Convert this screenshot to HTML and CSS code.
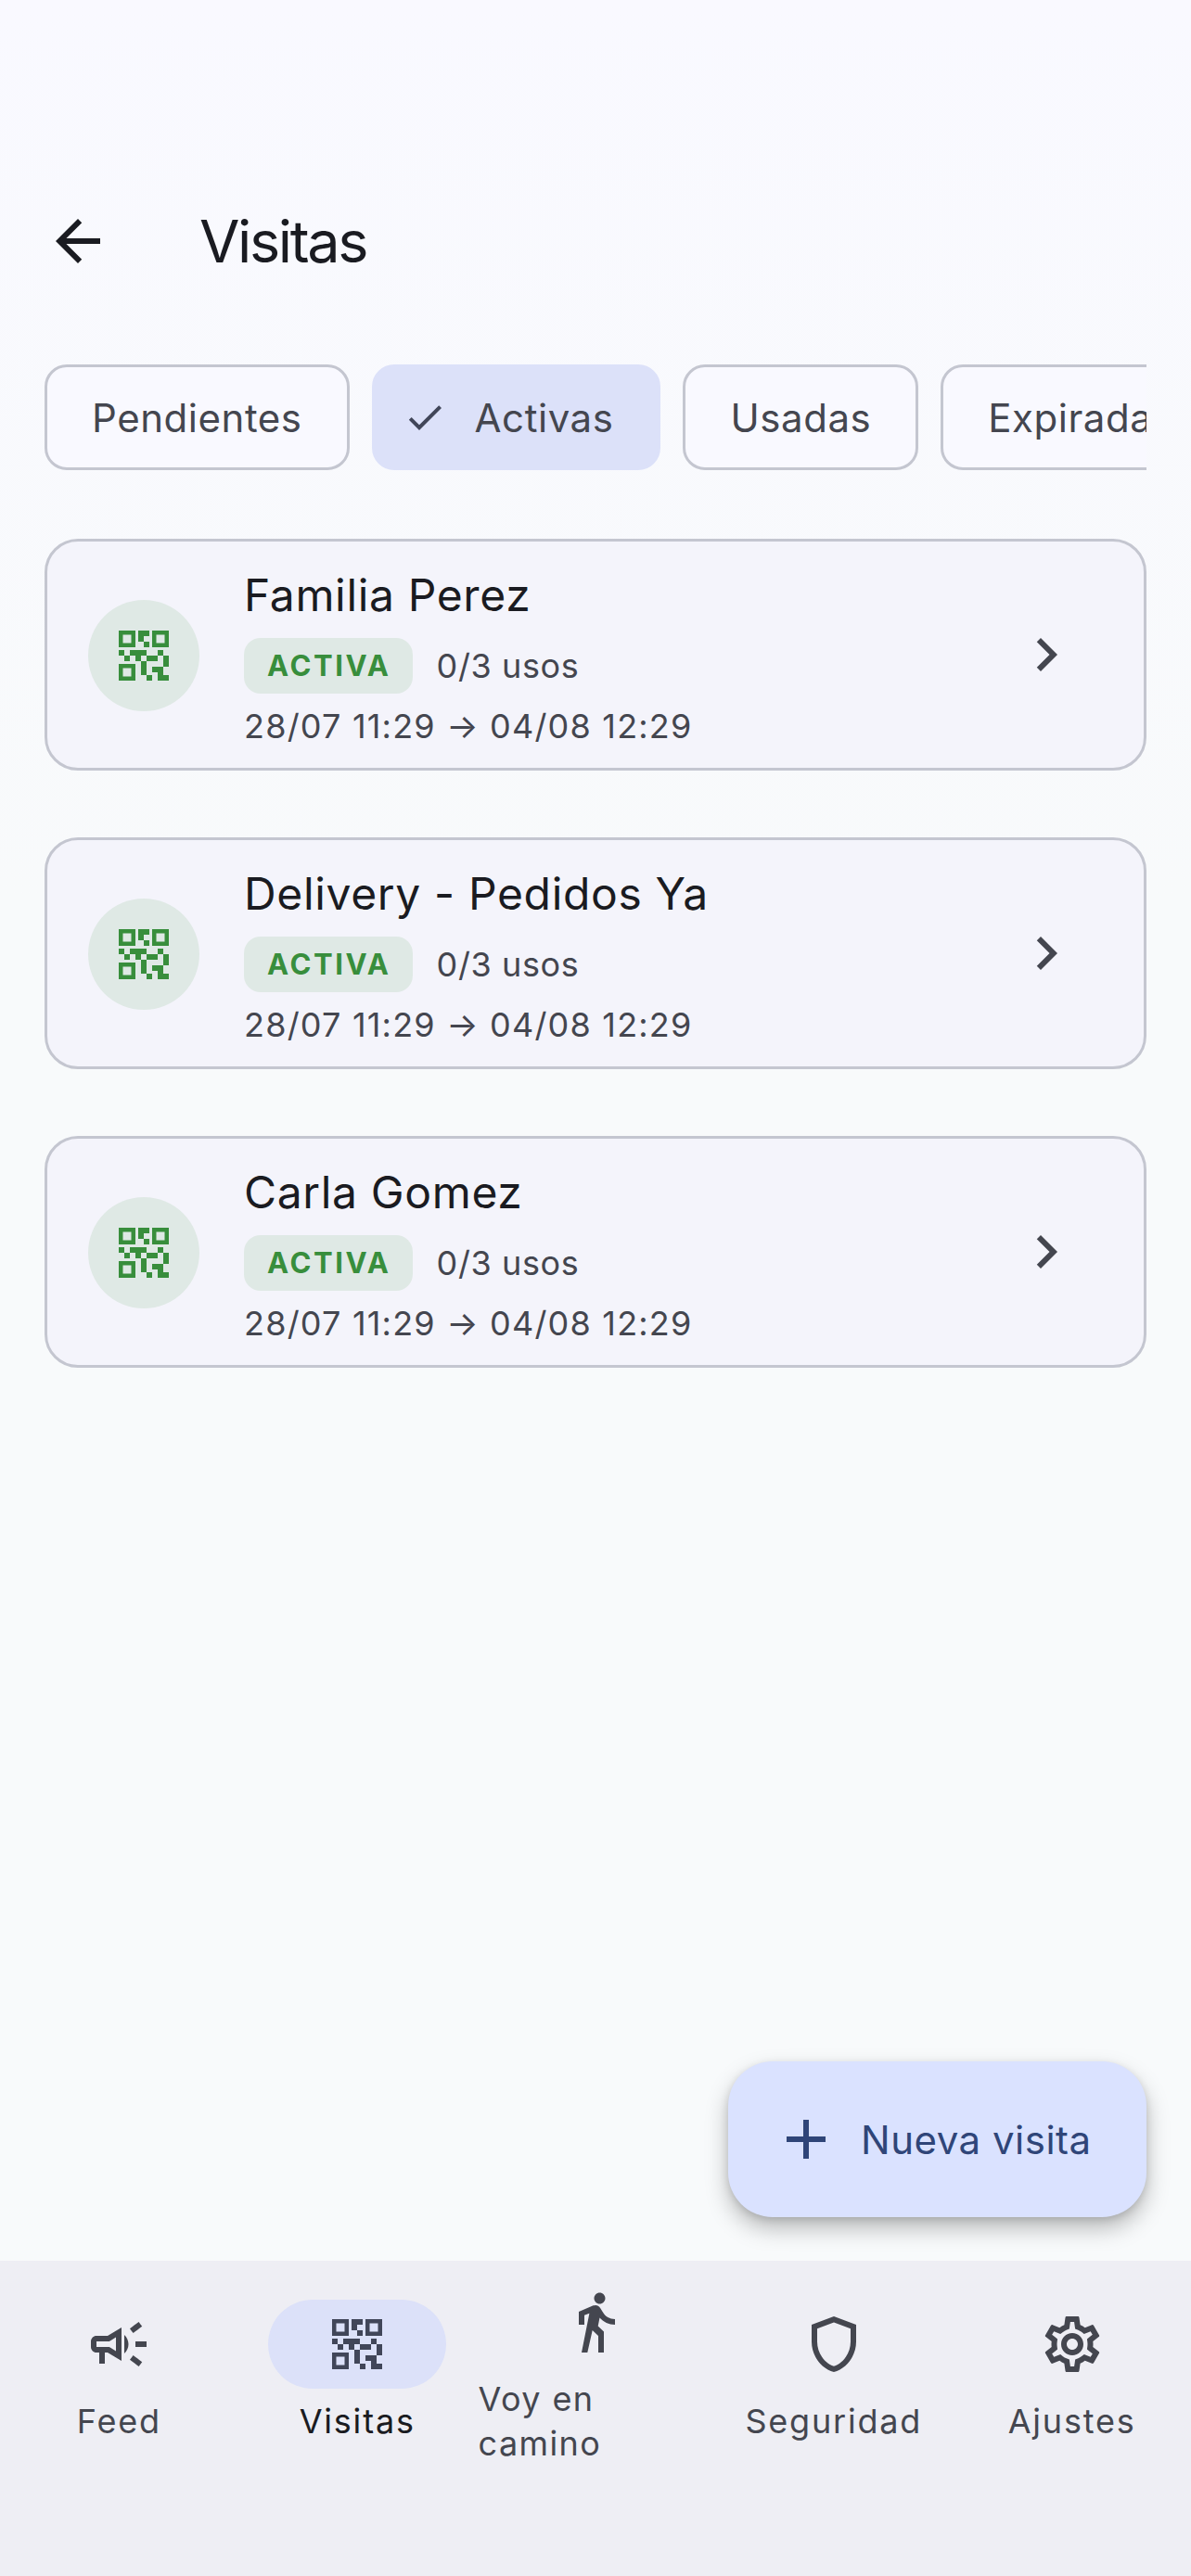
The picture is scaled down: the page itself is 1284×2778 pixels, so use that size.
FILE: index.html
```html
<!DOCTYPE html>
<html lang="es">
<head>
    <meta charset="UTF-8">
    <title>Visitas</title>
    <link rel="stylesheet" href="styles.css">
</head>
<body>
<svg class="defs" width="0" height="0">
    <symbol id="qr" viewBox="0 0 24 24"><path d="M15 21h-2v-2h2v2zm-2-7h-2v5h2v-5zm8-2h-2v4h2v-4zm-2-2h-2v2h2v-2zM7 12H5v2h2v-2zm-2-2H3v2h2v-2zm7-5h2V3h-4v4h2V5zM4.5 4.5v3h3v-3h-3zM9 9H3V3h6v6zm-4.5 7.5v3h3v-3h-3zM9 21H3v-6h6v6zm7.5-16.5v3h3v-3h-3zM21 9h-6V3h6v6zm-2 10v-3h-4v2h2v3h4v-2h-2zm-2-7h-4v2h4v-2zm-4-2H7v2h2v2h2v-2h2v-2zm1-1V7h-2v2h2z"/></symbol>
    <symbol id="chevron" viewBox="0 0 24 24"><path d="M10 6 8.59 7.41 13.17 12l-4.58 4.59L10 18l6-6z"/></symbol>
</svg>
<div class="app">
    <header class="topbar">
        <svg class="icon back" viewBox="0 0 24 24"><path d="M20 11H7.83l5.59-5.59L12 4l-8 8 8 8 1.41-1.41L7.83 13H20v-2z"/></svg>
        <h1>Visitas</h1>
    </header>
    <main class="content">
        <div class="chips">
            <div class="chip">Pendientes</div>
            <div class="chip selected">
                <svg class="check" viewBox="0 0 24 24"><path d="M9 16.17 4.83 12l-1.42 1.41L9 19 21 7l-1.41-1.41z"/></svg>
                Activas
            </div>
            <div class="chip">Usadas</div>
            <div class="chip">Expiradas</div>
        </div>
        <div class="card">
            <div class="avatar"><svg class="icon"><use href="#qr"/></svg></div>
            <div class="info">
                <div class="name">Familia Perez</div>
                <div class="status"><span class="badge">ACTIVA</span><span class="uses">0/3 usos</span></div>
                <div class="dates">28/07 11:29 → 04/08 12:29</div>
            </div>
            <svg class="icon chevron"><use href="#chevron"/></svg>
        </div>
        <div class="card">
            <div class="avatar"><svg class="icon"><use href="#qr"/></svg></div>
            <div class="info">
                <div class="name">Delivery - Pedidos Ya</div>
                <div class="status"><span class="badge">ACTIVA</span><span class="uses">0/3 usos</span></div>
                <div class="dates">28/07 11:29 → 04/08 12:29</div>
            </div>
            <svg class="icon chevron"><use href="#chevron"/></svg>
        </div>
        <div class="card">
            <div class="avatar"><svg class="icon"><use href="#qr"/></svg></div>
            <div class="info">
                <div class="name">Carla Gomez</div>
                <div class="status"><span class="badge">ACTIVA</span><span class="uses">0/3 usos</span></div>
                <div class="dates">28/07 11:29 → 04/08 12:29</div>
            </div>
            <svg class="icon chevron"><use href="#chevron"/></svg>
        </div>
        <button class="fab">
            <svg class="icon" viewBox="0 0 24 24"><path d="M19 13h-6v6h-2v-6H5v-2h6V5h2v6h6v2z"/></svg>
            Nueva visita
        </button>
    </main>
    <nav class="navbar">
        <div class="nav-item">
            <div class="pill"><svg class="icon" viewBox="0 0 24 24"><path d="M18 11v2h4v-2h-4zm-2 6.61c.96.71 2.21 1.65 3.2 2.39.4-.53.8-1.07 1.2-1.6-.99-.74-2.24-1.68-3.2-2.4-.4.54-.8 1.08-1.2 1.61zM20.4 5.6c-.4-.53-.8-1.07-1.2-1.6-.99.74-2.24 1.68-3.2 2.4.4.53.8 1.07 1.2 1.6.96-.72 2.21-1.65 3.2-2.4zM4 9c-1.1 0-2 .9-2 2v2c0 1.1.9 2 2 2h1v4h2v-4h1l5 3V6L8 9H4zm5.03 1.71L11 9.53v4.94l-1.97-1.18-.48-.29H4v-2h4.55l.48-.29zM15.5 12c0-1.33-.58-2.53-1.5-3.35v6.69c.92-.81 1.5-2.01 1.5-3.34z"/></svg></div>
            <span class="label">Feed</span>
        </div>
        <div class="nav-item active">
            <div class="pill"><svg class="icon"><use href="#qr"/></svg></div>
            <span class="label">Visitas</span>
        </div>
        <div class="nav-item">
            <div class="pill"><svg class="icon" viewBox="0 0 24 24"><path d="M13.5 5.5c1.1 0 2-.9 2-2s-.9-2-2-2-2 .9-2 2 .9 2 2 2zM9.8 8.9 7 23h2.1l1.8-8 2.1 2v6h2v-7.5l-2.1-2 .6-3C14.8 12 16.8 13 19 13v-2c-1.9 0-3.5-1-4.3-2.4l-1-1.6c-.4-.6-1-1-1.7-1-.3 0-.5.1-.8.1L6 8.3V13h2V9.6l1.8-.7"/></svg></div>
            <span class="label wrapped">Voy en<br>camino</span>
        </div>
        <div class="nav-item">
            <div class="pill"><svg class="icon" viewBox="0 0 24 24"><path d="M12 2 4 5v6.09c0 5.05 3.41 9.76 8 10.91 4.59-1.15 8-5.86 8-10.91V5l-8-3zm6 9.09c0 4-2.55 7.7-6 8.83-3.45-1.13-6-4.82-6-8.83v-4.7l6-2.25 6 2.25v4.7z"/></svg></div>
            <span class="label">Seguridad</span>
        </div>
        <div class="nav-item">
            <div class="pill"><svg class="icon" viewBox="0 0 24 24"><path d="M19.43 12.98c.04-.32.07-.64.07-.98 0-.34-.03-.66-.07-.98l2.11-1.65c.19-.15.24-.42.12-.64l-2-3.46c-.09-.16-.26-.25-.44-.25-.06 0-.12.01-.17.03l-2.49 1c-.52-.4-1.08-.73-1.69-.98l-.38-2.65C14.46 2.18 14.25 2 14 2h-4c-.25 0-.46.18-.49.42l-.38 2.65c-.61.25-1.17.59-1.69.98l-2.49-1c-.06-.02-.12-.03-.18-.03-.17 0-.34.09-.43.25l-2 3.46c-.13.22-.07.49.12.64l2.11 1.65c-.04.32-.07.65-.07.98 0 .33.03.66.07.98l-2.11 1.65c-.19.15-.24.42-.12.64l2 3.46c.09.16.26.25.44.25.06 0 .12-.01.17-.03l2.49-1c.52.4 1.08.73 1.69.98l.38 2.65c.03.24.24.42.49.42h4c.25 0 .46-.18.49-.42l.38-2.65c.61-.25 1.17-.59 1.69-.98l2.49 1c.06.02.12.03.18.03.17 0 .34-.09.43-.25l2-3.46c.12-.22.07-.49-.12-.64l-2.11-1.65zm-1.98-1.71c.04.31.05.52.05.73 0 .21-.02.43-.05.73l-.14 1.13.89.7 1.08.84-.7 1.21-1.27-.51-1.04-.42-.9.68c-.43.32-.84.56-1.25.73l-1.06.43-.16 1.13-.2 1.35h-1.4l-.19-1.35-.16-1.13-1.06-.43c-.43-.18-.83-.41-1.23-.71l-.91-.7-1.06.43-1.27.51-.7-1.21 1.08-.84.89-.7-.14-1.13c-.03-.31-.05-.54-.05-.74s.02-.43.05-.73l.14-1.13-.89-.7-1.08-.84.7-1.21 1.27.51 1.04.42.9-.68c.43-.32.84-.56 1.25-.73l1.06-.43.16-1.13.2-1.35h1.39l.19 1.35.16 1.13 1.06.43c.43.18.83.41 1.23.71l.91.7 1.06-.43 1.27-.51.7 1.21-1.07.85-.89.7.14 1.13zM12 8c-2.21 0-4 1.79-4 4s1.79 4 4 4 4-1.79 4-4-1.79-4-4-4zm0 6c-1.1 0-2-.9-2-2s.9-2 2-2 2 .9 2 2-.9 2-2 2z"/></svg></div>
            <span class="label">Ajustes</span>
        </div>
    </nav>
</div>
</body>
</html>
```

FILE: styles.css
```css
* { box-sizing: border-box; }
html, body { margin: 0; padding: 0; }
body { font-family: Inter, "Noto Sans", sans-serif; color: #1a1b21; }
.defs { display: block; }
.icon { display: block; width: 72px; height: 72px; fill: currentColor; flex: none; }

.app { display: flex; flex-direction: column; height: 2778px; overflow: hidden; background: linear-gradient(#f9f9ff, #f8fafb 35%); }

.topbar { display: flex; align-items: center; height: 192px; margin-top: 164px; padding-left: 48px; flex: none; }
.topbar h1 { margin: 0 0 0 95px; font-size: 63px; font-weight: 400; line-height: 84px; letter-spacing: -2.4px; }

.content { position: relative; flex: 1; padding: 37px 48px 0; }

.chips { display: flex; gap: 24px; overflow: hidden; margin-bottom: 74px; }
.chip { display: flex; align-items: center; flex: none; height: 114px; padding: 0 48px; border: 3px solid #c4c6d0; border-radius: 24px; background: #f9f9ff; font-size: 42px; letter-spacing: .55px; color: #44464f; }
.chip.selected { padding: 0 48px 0 30px; border-color: #dce1f9; background: #dce1f9; }
.check { width: 48px; height: 48px; margin-right: 30px; fill: #414659; }

.card { display: flex; align-items: center; height: 250px; margin-bottom: 72px; padding: 0 69px 0 44px; border: 3px solid #c4c6d0; border-radius: 36px; background: #f4f4fb; }
.avatar { display: flex; align-items: center; justify-content: center; flex: none; width: 120px; height: 120px; margin-top: 1px; border-radius: 50%; background: #dfe9e5; color: #388e3c; }
.info { flex: 1; margin-left: 48px; padding-top: 4px; }
.name { font-size: 48px; line-height: 72px; letter-spacing: .65px; }
.status { display: flex; align-items: center; margin-top: 10px; }
.badge { display: block; height: 60px; padding: 0 23px 0 25px; border-radius: 18px; background: #dfe9e5; color: #388e3c; font-size: 31px; font-weight: 700; line-height: 60px; letter-spacing: 2.6px; }
.uses { margin-left: 26px; font-size: 36px; letter-spacing: .6px; color: #44464f; }
.dates { margin-top: 8px; font-size: 36px; line-height: 54px; letter-spacing: 1.2px; color: #44464f; }
.chevron { color: #44464f; }

.fab { position: absolute; right: 48px; bottom: 47px; display: flex; align-items: center; gap: 23px; width: 451px; height: 168px; padding: 0 48px; border: 0; border-radius: 48px; background: #dae2ff; color: #2f4578; font-family: inherit; font-size: 42px; letter-spacing: .5px; box-shadow: 0 12px 24px rgba(0, 0, 0, .26), 0 3px 9px rgba(0, 0, 0, .12); }

.navbar { display: flex; flex: none; height: 340px; padding-bottom: 102px; background: #eeeef4; }
.nav-item { display: flex; flex-direction: column; align-items: center; justify-content: center; flex: 1 1 0; min-width: 0; gap: 11px; color: #44464f; }
.pill { display: flex; align-items: center; justify-content: center; flex: none; width: 192px; height: 96px; border-radius: 48px; }
.nav-item.active { color: #1a1b21; }
.nav-item.active .pill { background: #dce1f9; color: #414659; }
.label { font-size: 36px; line-height: 48px; letter-spacing: 1.8px; }
.wrapped { align-self: stretch; padding-left: 2px; letter-spacing: 1.4px; }
```
